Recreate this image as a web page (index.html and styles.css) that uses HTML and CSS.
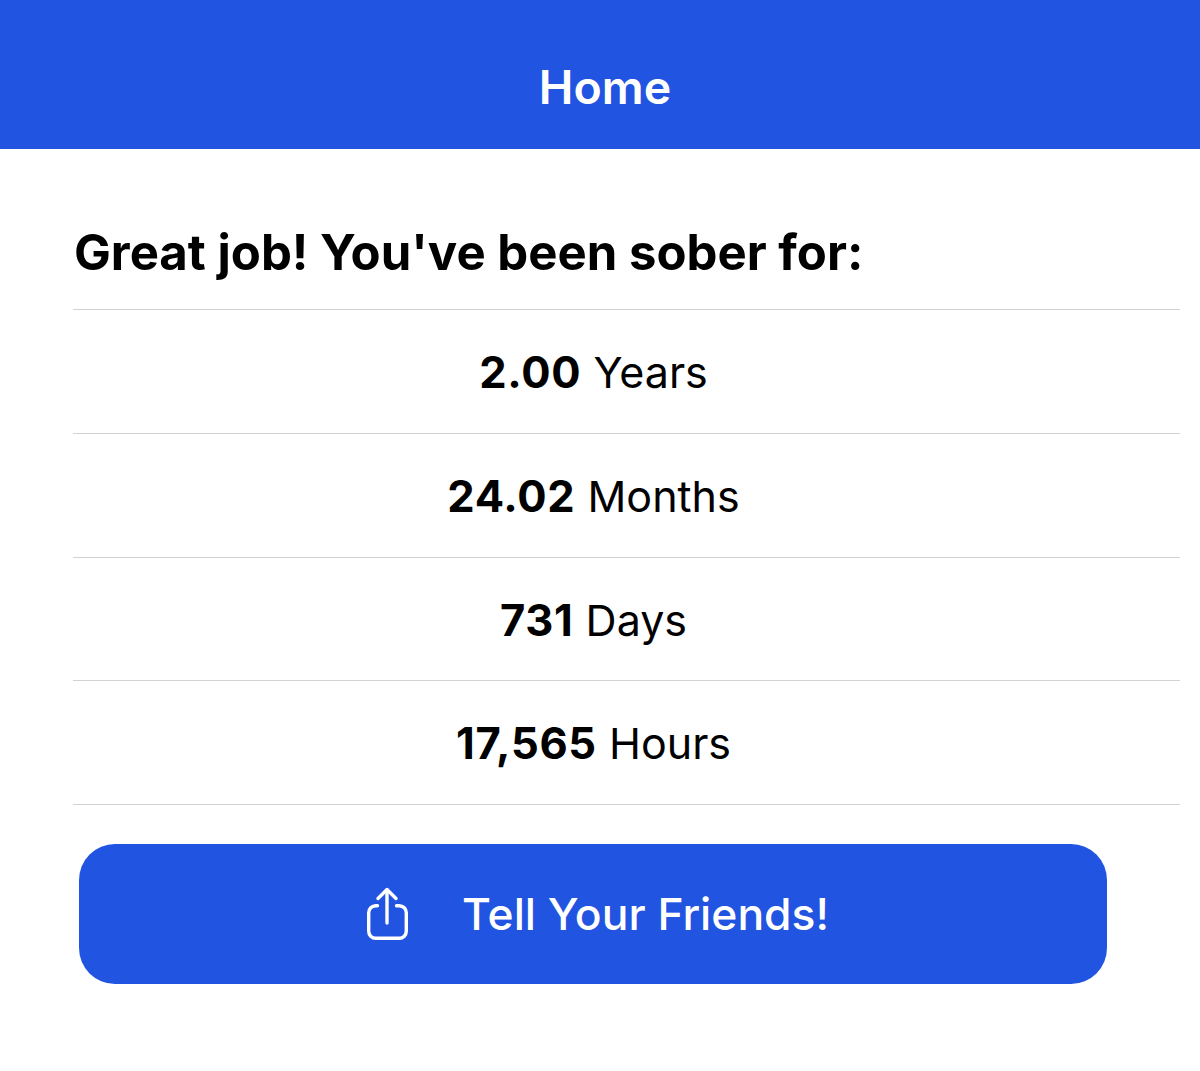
FILE: index.html
```html
<!DOCTYPE html>
<html lang="en">
<head>
    <meta charset="UTF-8">
    <title>Home</title>
    <link rel="stylesheet" href="styles.css">
</head>
<body>
    <header class="nav-bar">Home</header>
    <h1 class="headline">Great job! You've been sober for:</h1>
    <ul class="stat-list">
        <li class="stat-row"><b class="stat-num">2.00</b> Years</li>
        <li class="stat-row"><b class="stat-num">24.02</b> Months</li>
        <li class="stat-row"><b class="stat-num">731</b> Days</li>
        <li class="stat-row"><b class="stat-num">17,565</b> Hours</li>
    </ul>
    <button class="share-btn">
        <svg class="share-icon" width="44" height="56" viewBox="0 0 44 56" fill="none" stroke="#fff" stroke-width="3.4" stroke-linecap="round" stroke-linejoin="round">
            <path d="M12.5 19.7H10.7a7 7 0 0 0-7 7v18.6a7 7 0 0 0 7 7h23.6a7 7 0 0 0 7-7V26.7a7 7 0 0 0-7-7h-2.8"/>
            <path d="M22 37V4"/>
            <path d="M13 12.5l9-9 9 9"/>
        </svg>
        <span>Tell Your Friends!</span>
    </button>
</body>
</html>
```
FILE: styles.css
```css
body {
    margin: 0;
    font-family: Inter, "Liberation Sans", sans-serif;
    background: #fff;
    color: #000;
}

.nav-bar {
    height: 149px;
    box-sizing: border-box;
    padding: 59px 0 0 10px;
    background: #2254e2;
    color: #fff;
    font-size: 46.5px;
    line-height: 56px;
    font-weight: 600;
    text-align: center;
}

.headline {
    margin: 0;
    padding: 74px 0 28px 74px;
    font-size: 49.1px;
    line-height: 58px;
    font-weight: 700;
}

.stat-list {
    list-style: none;
    margin: 0 20px 0 73px;
    padding: 0;
    border-top: 1px solid #d2d2d2;
}

.stat-row {
    height: 122.75px;
    padding-right: 66px;
    border-bottom: 1px solid #d2d2d2;
    font-size: 43px;
    line-height: 125px;
    text-align: center;
}

.stat-num {
    font-size: 43.5px;
    letter-spacing: 0.7px;
}

.share-btn {
    display: flex;
    align-items: center;
    justify-content: center;
    gap: 53px;
    width: 1028px;
    height: 140px;
    margin: 39px 0 0 79px;
    padding: 0 0 0 8px;
    border: none;
    border-radius: 36px;
    background: #2254e2;
    color: #fff;
    font-family: inherit;
    font-size: 44.4px;
    font-weight: 500;
}
```
